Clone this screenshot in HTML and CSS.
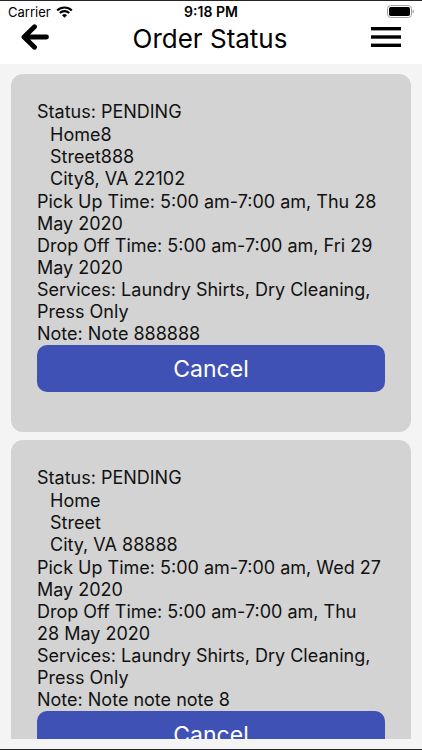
FILE: index.html
```
<!DOCTYPE html>
<html lang="en">
<head>
    <meta charset="UTF-8">
    <meta name="viewport" content="width=device-width, initial-scale=1.0">
    <title>Order Status</title>
    <link rel="stylesheet" href="styles.css">
</head>
<body>
    <div class="app">
        <header class="header">
            <div class="status-bar">
                <div class="carrier">
                    <span>Carrier</span>
                    <svg class="wifi" viewBox="0 0 17 12" fill="none" stroke="#000" stroke-width="2.1">
                        <path d="M1.2 4.5 A10.4 10.4 0 0 1 15.8 4.5"/>
                        <path d="M3.8 7.1 A6.7 6.7 0 0 1 13.2 7.1"/>
                        <path d="M8.5 11.8 L6 9.3 A3.6 3.6 0 0 1 11 9.3 Z" fill="#000" stroke="none"/>
                    </svg>
                </div>
                <div class="clock">9:18 PM</div>
                <svg class="battery" viewBox="0 0 27 13">
                    <rect x="0.5" y="0.5" width="24" height="12" rx="3.2" fill="#fff" stroke="#a3a3a3"/>
                    <rect x="2" y="2" width="21" height="9" rx="1.8" fill="#000"/>
                    <path d="M25.6 4.5 Q27 5 27 6.5 Q27 8 25.6 8.5 Z" fill="#a3a3a3"/>
                </svg>
            </div>
            <div class="nav-bar">
                <button class="icon-btn" type="button" aria-label="Back">
                    <svg width="28" height="26" viewBox="0 0 28 26" fill="none" stroke="#000" stroke-width="4.8" stroke-linecap="round" stroke-linejoin="round">
                        <path d="M13.5 2.7 L3 13 L13.5 23.3 M3.5 13 H25.5"/>
                    </svg>
                </button>
                <h1 class="title">Order Status</h1>
                <button class="icon-btn" type="button" aria-label="Menu">
                    <svg width="30" height="20" viewBox="0 0 30 20" fill="#000">
                        <rect x="0" y="0" width="30" height="3.4"/>
                        <rect x="0" y="8.3" width="30" height="3.4"/>
                        <rect x="0" y="16.6" width="30" height="3.4"/>
                    </svg>
                </button>
            </div>
        </header>

        <main class="orders">
            <section class="order-card">
                <p>Status: PENDING</p>
                <div class="address">
                    <p>Home8</p>
                    <p>Street888</p>
                    <p>City8, VA 22102</p>
                </div>
                <p>Pick Up Time: 5:00 am-7:00 am, Thu 28 May 2020</p>
                <p>Drop Off Time: 5:00 am-7:00 am, Fri 29 May 2020</p>
                <p>Services: Laundry Shirts, Dry Cleaning, Press Only</p>
                <p>Note: Note 888888</p>
                <button class="cancel-btn" type="button">Cancel</button>
            </section>

            <section class="order-card">
                <p>Status: PENDING</p>
                <div class="address">
                    <p>Home</p>
                    <p>Street</p>
                    <p>City, VA 88888</p>
                </div>
                <p>Pick Up Time: 5:00 am-7:00 am, Wed 27 May 2020</p>
                <p>Drop Off Time: 5:00 am-7:00 am, Thu 28&nbsp;May 2020</p>
                <p>Services: Laundry Shirts, Dry Cleaning, Press Only</p>
                <p>Note: Note note note 8</p>
                <button class="cancel-btn" type="button">Cancel</button>
            </section>
        </main>
    </div>
</body>
</html>
```
FILE: styles.css
```
* {
    box-sizing: border-box;
}

body {
    margin: 0;
    font-family: Inter, "Liberation Sans", sans-serif;
    color: #111;
    background-color: #f4f4f4;
}

h1,
p {
    margin: 0;
}

button {
    font-family: inherit;
    border: none;
    cursor: pointer;
}

.app {
    display: flex;
    flex-direction: column;
    height: 100vh;
    padding-bottom: 10px;
    border-top: 1px solid #262427;
    border-bottom: 1px solid #262427;
}

.header {
    flex: none;
    background-color: #fff;
    color: #000;
}

.status-bar {
    display: grid;
    grid-template-columns: 1fr auto 1fr;
    align-items: center;
    height: 21px;
    padding: 0 8px;
    font-size: 13px;
}

.carrier {
    display: flex;
    align-items: center;
    gap: 5px;
}

.wifi {
    width: 17px;
    height: 12px;
}

.clock {
    font-size: 14px;
    font-weight: 600;
}

.battery {
    justify-self: end;
    width: 27px;
    height: 13px;
}

.nav-bar {
    display: flex;
    justify-content: space-between;
    align-items: center;
    height: 42px;
    padding: 0 21px 12px;
}

.icon-btn {
    display: flex;
    padding: 0;
    background: none;
}

.title {
    padding-top: 4px;
    font-size: 26px;
    font-weight: 400;
    line-height: 30px;
}

.orders {
    flex: 1;
    min-height: 0;
    display: flex;
    flex-direction: column;
    gap: 8px;
    padding: 10px 11px 0;
    overflow: hidden;
}

.order-card {
    flex: none;
    padding: 27px 26px 40px;
    border-radius: 12px;
    background-color: #d3d3d3;
    font-size: 18px;
    line-height: 22px;
}

.address {
    padding: 1px 0 1px 13px;
}

.cancel-btn {
    display: block;
    width: 100%;
    height: 47px;
    border-radius: 10px;
    background-color: #3f51b5;
    color: #fff;
    font-size: 23px;
}
```
